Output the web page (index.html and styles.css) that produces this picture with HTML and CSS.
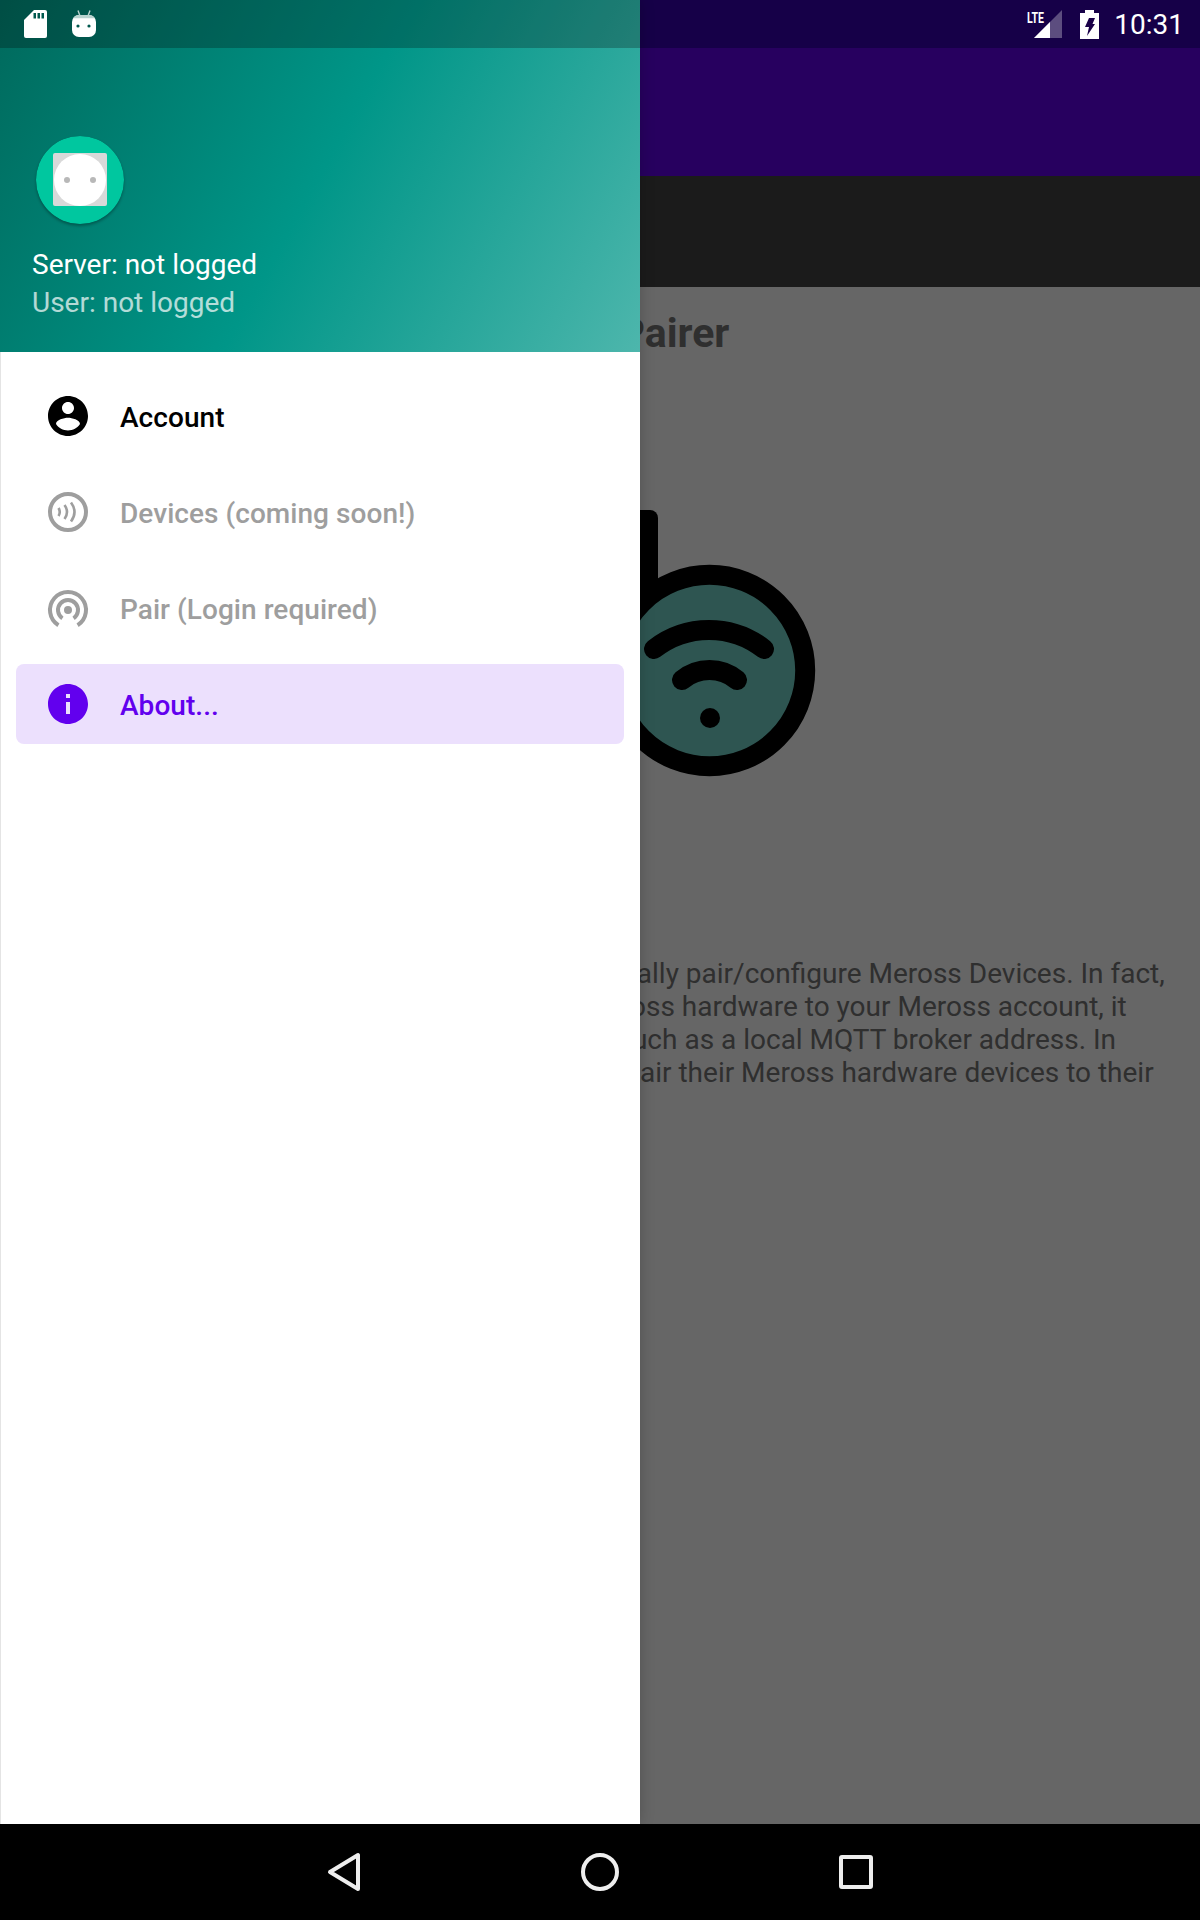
FILE: index.html
```html
<!DOCTYPE html>
<html lang="en">
<head>
    <meta charset="UTF-8">
    <title>Meross Pairer</title>
    <link rel="stylesheet" href="styles.css">
</head>
<body>
    <div class="screen">
        <!-- activity underneath the drawer -->
        <div class="activity">
            <div class="status-bg"></div>
            <div class="app-bar"></div>
            <div class="tabs"></div>
            <main class="content">
                <h1 class="title">Meross Pairer</h1>
                <svg class="logo" width="240" height="290" viewBox="0 0 240 290">
                    <path d="M58 120V18a8 8 0 0 0-8-8h-20v110z" fill="#000"/>
                    <circle cx="109.500" cy="170.500" r="95.700" fill="#73d5cb" stroke="#000" stroke-width="20"/>
                    <path d="M54 149A89 89 0 0 1 164 149M82 180A43 43 0 0 1 137 180" fill="none" stroke="#000" stroke-width="20" stroke-linecap="round"/>
                    <circle cx="110" cy="218" r="10" fill="#000"/>
                </svg>
                <p class="intro">The application is meant to be just used to manually pair/configure Meross Devices. In fact,<br>
                while the official Meross phone app will pair Meross hardware to your Meross account, it<br>
                does not allow you to use your custom options such as a local MQTT broker address. In<br>
                order to overcome this issue, clients are able to pair their Meross hardware devices to their</p>
            </main>
        </div>
        <div class="scrim"></div>

        <aside class="drawer">
            <header class="drawer-head">
                <div class="drawer-tint"></div>
                <svg class="avatar" width="88" height="88" viewBox="0 0 88 88">
                    <circle cx="44" cy="44" r="44" fill="#00c79f"/>
                    <rect x="17" y="17" width="54" height="53" rx="2" fill="#d9d9d9"/>
                    <circle cx="44" cy="44" r="26" fill="#fff"/>
                    <circle cx="31" cy="44" r="3" fill="#b8b8b8"/>
                    <circle cx="57" cy="44" r="3" fill="#b8b8b8"/>
                </svg>
                <div class="head-server">Server: not logged</div>
                <div class="head-user">User: not logged</div>
            </header>
            <nav class="menu">
                <a class="item">
                    <svg class="item-icon" width="48" height="48" viewBox="0 0 24 24"><path d="M12 2C6.48 2 2 6.48 2 12s4.48 10 10 10 10-4.48 10-10S17.52 2 12 2zm0 3c1.66 0 3 1.34 3 3s-1.34 3-3 3-3-1.34-3-3 1.34-3 3-3zm0 14.2c-2.5 0-4.71-1.28-6-3.22.03-1.99 4-3.08 6-3.08 1.99 0 5.97 1.09 6 3.08-1.29 1.94-3.5 3.22-6 3.22z" fill="#000"/></svg>
                    <span class="item-label">Account</span>
                </a>
                <a class="item disabled">
                    <svg class="item-icon" width="48" height="48" viewBox="0 0 48 48" fill="none" stroke="#9e9e9e">
                        <circle cx="24" cy="24" r="18" stroke-width="4"/>
                        <path d="M14.5 20Q17 24 14.5 28M20.5 17Q25.5 24 20.5 31M27 14.5Q34 24 27 33.5" stroke-width="2.6"/>
                    </svg>
                    <span class="item-label">Devices (coming soon!)</span>
                </a>
                <a class="item disabled">
                    <svg class="item-icon" width="48" height="48" viewBox="0 0 48 48" fill="none" stroke="#9e9e9e" stroke-width="4">
                        <path d="M14.4 41.2A18 18 0 1 1 33.6 41.2M18.4 34.3A10 10 0 1 1 29.6 34.3"/>
                        <circle cx="24" cy="26" r="4" fill="#9e9e9e" stroke="none"/>
                    </svg>
                    <span class="item-label">Pair (Login required)</span>
                </a>
                <a class="item active">
                    <svg class="item-icon" width="48" height="48" viewBox="0 0 24 24"><path d="M12 2C6.48 2 2 6.48 2 12s4.48 10 10 10 10-4.48 10-10S17.52 2 12 2zm1 15h-2v-6h2v6zm0-8h-2V7h2v2z" fill="#6200ee"/></svg>
                    <span class="item-label">About...</span>
                </a>
            </nav>
        </aside>

        <!-- system bars sit on top of everything -->
        <div class="status-bar">
            <div class="status-left">
                <svg width="24" height="28" viewBox="0 0 24 28">
                    <path d="M10 0H21a2 2 0 0 1 2 2V26a2 2 0 0 1-2 2H2a2 2 0 0 1-2-2V10z" fill="#fff"/>
                    <path d="M9.500 3H12V8.500H9.500zM13.500 3H16V8.500H13.500zM17.500 3H20V8.500H17.500z" fill="#00594e"/>
                </svg>
                <svg width="24" height="28" viewBox="0 0 24 28">
                    <path d="M6 0.500L8 6M18 0.500L16 6" stroke="#b9d3cf" stroke-width="1.400" fill="none"/>
                    <path d="M7 5H17a7 7 0 0 1 7 7V20a7 7 0 0 1-7 7H7a7 7 0 0 1-7-7V12a7 7 0 0 1 7-7z" fill="#fff"/>
                    <path d="M1.200 8.200A7 7 0 0 1 7 5H17a7 7 0 0 1 5.800 3.200z" fill="#b9d3cf"/>
                    <circle cx="6" cy="16" r="1.600" fill="#00594e"/>
                    <circle cx="17" cy="16" r="1.600" fill="#00594e"/>
                </svg>
            </div>
            <div class="status-right">
                <svg class="signal" width="36" height="30" viewBox="0 0 36 30">
                    <text x="0" y="14" class="lte" textLength="17" lengthAdjust="spacingAndGlyphs">LTE</text>
                    <path d="M35 1V29H7z" fill="#fff" fill-opacity=".3"/>
                    <path d="M23 13V29H7z" fill="#fff"/>
                </svg>
                <svg class="battery" width="19" height="29" viewBox="0 0 19 29">
                    <path d="M5 0H14V3H19V29H0V3H5z" fill="#fff"/>
                    <path d="M9 8H15L12.500 14H15L7 26L9 17H5z" fill="#1a0048"/>
                </svg>
                <span class="clock">10:31</span>
            </div>
        </div>
        <div class="nav-bar">
            <svg width="48" height="48" viewBox="0 0 48 48" fill="none" stroke="#eee" stroke-width="4" stroke-linejoin="round"><path d="M38 7V41L10 24z"/></svg>
            <svg width="48" height="48" viewBox="0 0 48 48" fill="none" stroke="#eee" stroke-width="4"><circle cx="24" cy="24" r="17"/></svg>
            <svg width="48" height="48" viewBox="0 0 48 48" fill="none" stroke="#eee" stroke-width="4" stroke-linejoin="round"><rect x="9" y="9" width="30" height="30" rx="1"/></svg>
        </div>
    </div>
</body>
</html>
```

FILE: styles.css
```css
html, body { margin: 0; padding: 0; }
body { font-family: Roboto, "Liberation Sans", sans-serif; background-color: #fff; }

.screen { position: relative; width: 1200px; height: 1920px; overflow: hidden; }

.activity { display: flex; flex-direction: column; height: 1824px; background-color: #fff; }
.status-bg { height: 48px; background-color: #3700b3; }
.app-bar { height: 128px; background-color: #6200ee; }
.tabs { height: 111px; background-color: #444; }
.content { flex: 1; padding: 0 32px; color: #757575; }
.title { margin: 22px 0 0; font-size: 41px; line-height: 48px; font-weight: 700; text-align: center; white-space: nowrap; }
.logo { display: block; margin: 143px 0 0 568px; }
.intro { margin: 167px 0 0; font-size: 28px; line-height: 33px; white-space: nowrap; }

.scrim { position: absolute; left: 0; top: 0; right: 0; bottom: 96px; background-color: rgba(0, 0, 0, .6); }

.drawer { position: absolute; left: 0; top: 0; bottom: 96px; width: 640px; display: flex; flex-direction: column; background-color: #fff; box-shadow: 0 0 14px rgba(0, 0, 0, .2); }
.drawer-head { position: relative; height: 352px; box-sizing: border-box; padding: 136px 32px 0; color: #fff; background-image: linear-gradient(119deg, #00695c, #009688 50%, #4db6ac); }
.drawer-tint { position: absolute; left: 0; top: 0; right: 0; height: 48px; background-color: rgba(0, 0, 0, .25); }
.avatar { display: block; margin-left: 4px; border-radius: 50%; box-shadow: 0 2px 3px rgba(0, 0, 0, .3); }
.head-server { margin-top: 22px; font-size: 28px; line-height: 38px; }
.head-user { font-size: 28px; line-height: 38px; opacity: .7; }

.menu { flex: 1; display: flex; flex-direction: column; gap: 16px; padding: 24px 16px; border-left: 1px solid #e4e4e4; }
.item { display: flex; align-items: center; height: 80px; margin-left: -1px; padding-left: 28px; border-radius: 8px; font-size: 28px; font-weight: 500; color: #000; }
.item-icon { margin-right: 28px; }
.item-label { padding-top: 2px; letter-spacing: .05px; }
.item.disabled { color: #9e9e9e; }
.item.active { color: #6200ee; background-color: #ece0fd; }

.status-bar { position: absolute; left: 0; top: 0; right: 0; height: 48px; display: flex; justify-content: space-between; align-items: center; }
.status-left { display: flex; gap: 24px; margin-left: 24px; }
.status-right { display: flex; align-items: center; margin-right: 16px; }
.signal { margin-right: 17px; }
.lte { font-family: Roboto, sans-serif; font-size: 14px; font-weight: 700; fill: #fff; }
.battery { margin-right: 15px; }
.clock { font-size: 28px; color: #fff; }

.nav-bar { position: absolute; left: 0; right: 0; bottom: 0; height: 96px; display: flex; justify-content: center; align-items: center; gap: 208px; background-color: #000; }
```
